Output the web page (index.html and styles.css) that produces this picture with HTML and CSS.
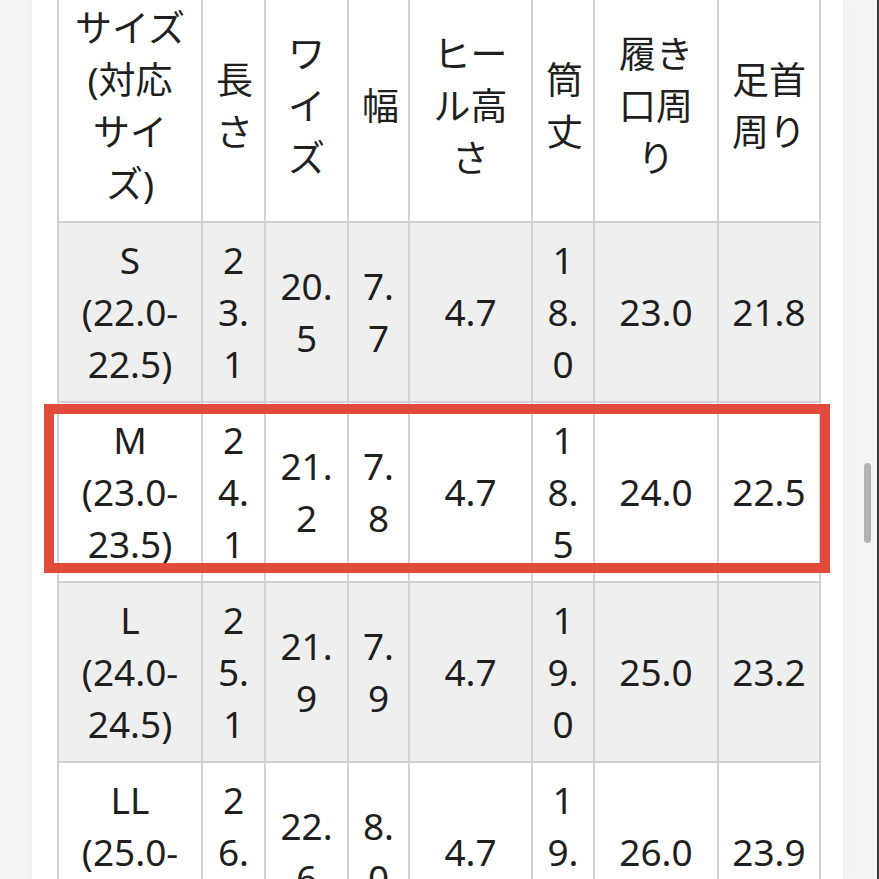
FILE: index.html
```html
<!DOCTYPE html>
<html lang="ja">
<head>
<meta charset="utf-8">
<title>サイズ表</title>
<link rel="stylesheet" href="styles.css">
</head>
<body>
<div class="page">
  <div class="table-wrap">
    <table class="size-table">
      <colgroup>
        <col class="c1"><col class="c2"><col class="c3"><col class="c4"><col class="c5"><col class="c6"><col class="c7"><col class="c8">
      </colgroup>
      <thead>
        <tr>
          <th>サイズ(対応サイズ)</th>
          <th>長さ</th>
          <th>ワイズ</th>
          <th>幅</th>
          <th>ヒール高さ</th>
          <th>筒丈</th>
          <th>履き口周り</th>
          <th>足首周り</th>
        </tr>
      </thead>
      <tbody>
        <tr class="alt">
          <td>S<br>(22.0-22.5)</td><td>23.1</td><td>20.5</td><td>7.7</td><td>4.7</td><td>18.0</td><td>23.0</td><td>21.8</td>
        </tr>
        <tr>
          <td>M<br>(23.0-23.5)</td><td>24.1</td><td>21.2</td><td>7.8</td><td>4.7</td><td>18.5</td><td>24.0</td><td>22.5</td>
        </tr>
        <tr class="alt">
          <td>L<br>(24.0-24.5)</td><td>25.1</td><td>21.9</td><td>7.9</td><td>4.7</td><td>19.0</td><td>25.0</td><td>23.2</td>
        </tr>
        <tr>
          <td>LL<br>(25.0-25.5)</td><td>26.1</td><td>22.6</td><td>8.0</td><td>4.7</td><td>19.5</td><td>26.0</td><td>23.9</td>
        </tr>
      </tbody>
    </table>
    <div class="highlight"></div>
  </div>
</div>
<div class="scrollbar"></div>
</body>
</html>
```
FILE: styles.css
```css
html, body {
  margin: 0;
  padding: 0;
}
body {
  width: 879px;
  height: 879px;
  overflow: hidden;
  background: #f4f4f4;
  box-sizing: border-box;
  border-right: 2px solid #3a3a3a;
  position: relative;
  font-family: "Noto Sans", "Noto Sans CJK JP", sans-serif;
  color: #1f1f1f;
}
.page {
  display: flow-root;
  margin-left: 32px;
  width: 811px;
  height: 100%;
  background: #fff;
  box-shadow: 0 0 10px rgba(0, 0, 0, 0.04);
}
.table-wrap {
  position: relative;
  margin-left: 25px;
  margin-top: -11px;
  width: 765px;
}
.size-table {
  border-collapse: collapse;
  table-layout: fixed;
  width: 764px;
  font-size: 37px;
  line-height: 52px;
}
.c1 { width: 144px; }
.c2 { width: 63px; }
.c3 { width: 83px; }
.c4 { width: 61px; }
.c5 { width: 123px; }
.c6 { width: 62px; }
.c7 { width: 124px; }
.c8 { width: 102px; }
.size-table th,
.size-table td {
  border: 2px solid #d2d2d2;
  padding: 11px 13px;
  text-align: center;
  vertical-align: middle;
  font-weight: 400;
  overflow-wrap: anywhere;
  background: #fff;
}
.size-table tr.alt td {
  background: #efefef;
}
.highlight {
  position: absolute;
  left: -13px;
  top: 415px;
  width: 786px;
  height: 169px;
  box-sizing: border-box;
  border: 10px solid #e04b3b;
  pointer-events: none;
}
.scrollbar {
  position: absolute;
  left: 864px;
  top: 463px;
  width: 7px;
  height: 80px;
  border-radius: 4px;
  background: #b3b3b3;
}
```
